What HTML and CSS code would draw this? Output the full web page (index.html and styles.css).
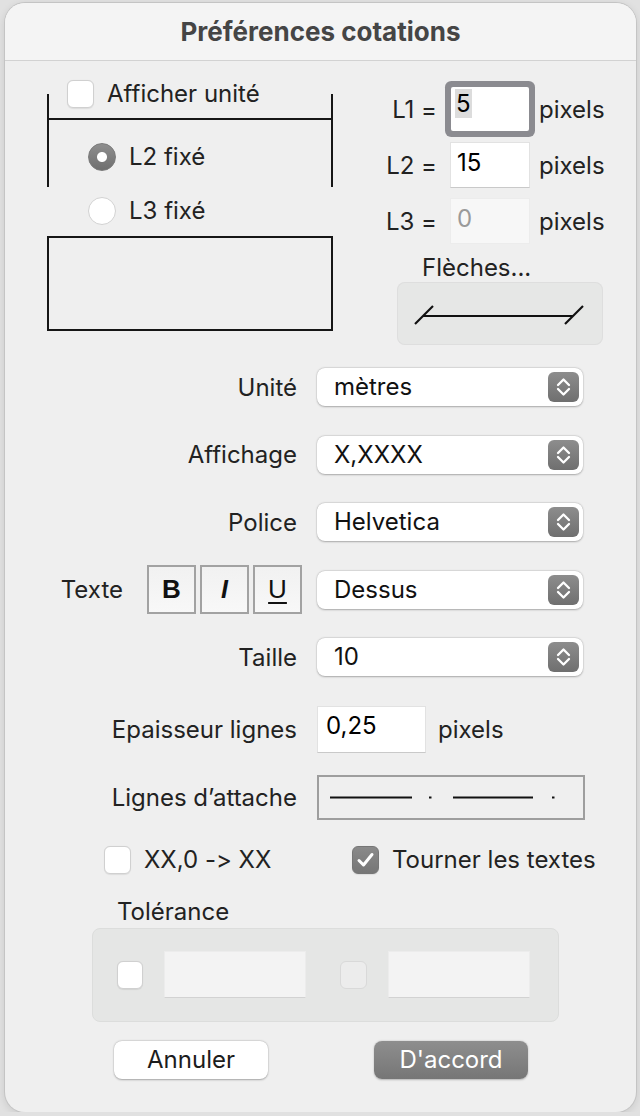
FILE: index.html
```html
<!DOCTYPE html>
<html lang="fr">
<head>
<meta charset="UTF-8">
<title>Préférences cotations</title>
<link rel="stylesheet" href="styles.css">
</head>
<body>
  <div class="window">
    <header class="titlebar">Préférences cotations</header>

    <section class="top">
      <div class="diagram">
        <div class="dim">
          <label class="check"><span class="box"></span>Afficher unité</label>
          <div class="dim-line"></div>
          <label class="radio l2"><span class="dot on"></span>L2 fixé</label>
        </div>
        <label class="radio l3"><span class="dot"></span>L3 fixé</label>
        <div class="frame"></div>
      </div>

      <div class="side">
        <div class="lengths">
          <span class="len-label">L1 =</span>
          <div class="field focus"><span class="sel">5</span></div>
          <span class="unit">pixels</span>
          <span class="len-label">L2 =</span>
          <div class="field">15</div>
          <span class="unit">pixels</span>
          <span class="len-label">L3 =</span>
          <div class="field off">0</div>
          <span class="unit">pixels</span>
        </div>
        <div class="arrows-label">Flèches...</div>
        <div class="arrows">
          <svg width="206" height="63" viewBox="0 0 206 63">
            <line x1="26" y1="34" x2="176" y2="34" stroke="#111" stroke-width="2.2"/>
            <line x1="18" y1="42" x2="36" y2="24" stroke="#111" stroke-width="2.2"/>
            <line x1="168" y1="42" x2="186" y2="24" stroke="#111" stroke-width="2.2"/>
          </svg>
        </div>
      </div>
    </section>

    <section class="settings">
      <div class="row">
        <span class="row-label">Unité</span>
        <div class="popup">mètres<span class="stepper"></span></div>
      </div>
      <div class="row">
        <span class="row-label">Affichage</span>
        <div class="popup">X,XXXX<span class="stepper"></span></div>
      </div>
      <div class="row">
        <span class="row-label">Police</span>
        <div class="popup">Helvetica<span class="stepper"></span></div>
      </div>
      <div class="row">
        <div class="row-label text-style">
          <span>Texte</span>
          <div class="style-btns">
            <span class="style-btn b">B</span>
            <span class="style-btn i">I</span>
            <span class="style-btn u">U</span>
          </div>
        </div>
        <div class="popup">Dessus<span class="stepper"></span></div>
      </div>
      <div class="row">
        <span class="row-label">Taille</span>
        <div class="popup">10<span class="stepper"></span></div>
      </div>
      <div class="row thick">
        <span class="row-label">Epaisseur lignes</span>
        <div class="field wide">0,25</div>
        <span class="unit after">pixels</span>
      </div>
      <div class="row attach">
        <span class="row-label">Lignes d’attache</span>
        <div class="dash-box">
          <svg width="264" height="41" viewBox="0 0 264 41">
            <g stroke="#111" stroke-width="2">
              <line x1="11" y1="20.5" x2="93" y2="20.5"/>
              <line x1="110" y1="20.5" x2="112.5" y2="20.5"/>
              <line x1="134" y1="20.5" x2="214" y2="20.5"/>
              <line x1="233" y1="20.5" x2="235.5" y2="20.5"/>
            </g>
          </svg>
        </div>
      </div>
    </section>

    <div class="options">
      <label class="check first"><span class="box"></span>XX,0 -&gt; XX</label>
      <label class="check"><span class="box checked">
        <svg width="27" height="28" viewBox="0 0 27 28"><path d="M7 14.5 L11.5 19 L20 8.5" fill="none" stroke="#fff" stroke-width="3" stroke-linecap="round" stroke-linejoin="round"/></svg>
      </span>Tourner les textes</label>
    </div>

    <div class="tol-label">Tolérance</div>
    <div class="tolerance">
      <span class="box"></span>
      <div class="field dim-field"></div>
      <span class="box disabled"></span>
      <div class="field dim-field"></div>
    </div>

    <div class="buttons">
      <button class="btn cancel">Annuler</button>
      <button class="btn ok">D'accord</button>
    </div>
  </div>

  <svg width="0" height="0" style="position:absolute">
    <defs>
      <symbol id="chev" viewBox="0 0 31 30">
        <polyline points="10,13 15.5,7.5 21,13" fill="none" stroke="#fff" stroke-width="2.3" stroke-linecap="round" stroke-linejoin="round"/>
        <polyline points="10,17 15.5,22.5 21,17" fill="none" stroke="#fff" stroke-width="2.3" stroke-linecap="round" stroke-linejoin="round"/>
      </symbol>
    </defs>
  </svg>
  <script>
    // stepper arrows on every popup button
    document.querySelectorAll('.stepper').forEach(s => {
      s.innerHTML = '<svg width="31" height="30"><use href="#chev"/></svg>';
    });
  </script>
</body>
</html>
```

FILE: styles.css
```css
* { box-sizing: border-box; }
body {
  margin: 0;
  padding: 3px 4px 0 5px;
  background: #e1e1e1;
  font-family: Inter, "Noto Sans", sans-serif;
  font-feature-settings: "calt" 0;
  font-size: 24px;
  color: #222;
}
.window {
  width: 631px;
  height: 1109px;
  background: #efefef;
  border-radius: 20px;
  overflow: hidden;
  box-shadow: 0 0 0 1px #c4c4c4, 0 2px 8px rgba(0,0,0,0.12);
}
.titlebar {
  height: 58px;
  display: flex;
  align-items: center;
  justify-content: center;
  background: #f4f4f4;
  border-bottom: 1px solid #d2d2d2;
  font-size: 26px;
  font-weight: 700;
  color: #454545;
}

/* checkboxes and radios */
.check, .radio {
  display: flex;
  align-items: center;
  height: 28px;
  line-height: 28px;
}
.box {
  flex: none;
  width: 27px;
  height: 28px;
  margin-right: 13px;
  background: #fff;
  border: 1px solid #d0d0d0;
  border-radius: 6px;
  box-shadow: 0 0.5px 1px rgba(0,0,0,0.08);
}
.box.checked {
  background: linear-gradient(#8a8a8a, #767676);
  border-color: #767676;
}
.box.checked svg { display: block; margin: -1px; }
.box.disabled {
  background: #ececec;
  border-color: #d9d9d9;
  box-shadow: none;
}
.dot {
  flex: none;
  width: 28px;
  height: 28px;
  margin-right: 13px;
  border-radius: 50%;
  background: #fff;
  border: 1px solid #d2d2d2;
}
.dot.on {
  background: radial-gradient(circle, #fff 0 4.5px, transparent 5.5px), linear-gradient(#8e8e8e, #6f6f6f);
  border-color: #7a7a7a;
}

/* top part: dimension sketch + lengths */
.top {
  display: flex;
  align-items: flex-start;
}
.diagram {
  margin-left: 42px;
  width: 286px;
}
.dim {
  display: flex;
  flex-direction: column;
  align-items: flex-start;
  margin-top: 33px;
  height: 93px;
  border-left: 2px solid #161616;
  border-right: 2px solid #161616;
}
.dim .check {
  margin-top: -14px;
  margin-left: 18px;
  height: 27px;
}
.dim-line {
  align-self: stretch;
  margin-top: 11px;
  border-top: 2px solid #161616;
}
.radio.l2 { margin-top: 23px; margin-left: 39px; }
.radio.l3 { margin-top: 10px; margin-left: 41px; }
.frame {
  margin-top: 11px;
  height: 95px;
  border: 2px solid #161616;
}

.side {
  margin-left: 52px;
  width: 218px;
}
.lengths {
  margin-top: 25px;
  display: grid;
  grid-template-columns: 65px 80px auto;
  grid-template-rows: repeat(3, 46px);
  row-gap: 10px;
  align-items: center;
}
.len-label {
  text-align: right;
  padding-right: 13px;
  white-space: nowrap;
}
.unit { padding-left: 9px; }
.field {
  height: 46px;
  padding: 6px 0 0 6px;
  background: #fff;
  border: 1px solid #e2e2e2;
  border-bottom-color: #c9c9c9;
  color: #000;
  line-height: 28px;
}
.field.focus {
  margin: 1px;
  height: 44px;
  padding: 2px 0 0 4px;
  border: none;
  border-radius: 2px;
  box-shadow: 0 0 0 6px #8b8b90;
}
.field .sel {
  display: inline-block;
  padding: 0 1px;
  line-height: 29px;
  background: #dcdcdc;
}
.field.off {
  background: #f7f7f7;
  border-color: #ececec;
  color: #9a9a9a;
}
.arrows-label {
  margin-top: 11px;
  padding-left: 37px;
  line-height: 26px;
}
.arrows {
  margin-top: 1px;
  margin-left: 12px;
  width: 206px;
  height: 63px;
  background: #e6e7e6;
  border-radius: 8px;
  box-shadow: inset 0 0 0 1px #dedede;
}
.arrows svg { display: block; }

/* popup rows */
.settings {
  margin-top: 23px;
  display: flex;
  flex-direction: column;
  gap: 29.5px;
}
.row {
  display: flex;
  align-items: center;
  height: 38px;
}
.row-label {
  flex: none;
  width: 292px;
  margin-right: 20px;
  text-align: right;
}
.popup {
  position: relative;
  width: 266px;
  height: 38px;
  padding-left: 17px;
  line-height: 37px;
  color: #111;
  background: #fff;
  border-radius: 8px;
  box-shadow: 0 0.5px 2px rgba(0,0,0,0.28), 0 0 0 0.5px rgba(0,0,0,0.06);
}
.stepper {
  position: absolute;
  top: 4px;
  right: 4px;
  width: 31px;
  height: 30px;
  border-radius: 6px;
  background: linear-gradient(#8d8d8d, #6f6f6f);
}
.stepper svg { display: block; }

.text-style {
  width: 297px;
  margin-right: 15px;
  display: flex;
  align-items: center;
  justify-content: flex-end;
  gap: 24px;
}
.style-btns {
  display: flex;
  gap: 4px;
}
.style-btn {
  width: 49px;
  height: 49px;
  display: flex;
  align-items: center;
  justify-content: center;
  border: 2px solid #a2a2a2;
  background: linear-gradient(#f1f1f1, #f8f8f8);
  color: #111;
  font-family: "Liberation Sans", Arial, sans-serif;
  font-size: 26px;
}
.style-btn.b { font-weight: 700; }
.style-btn.i { font-style: italic; font-weight: 700; font-size: 25px; }
.style-btn.u { text-decoration: underline; text-underline-offset: 4px; text-decoration-thickness: 2px; }

.row.thick { height: 47px; }
.field.wide {
  width: 109px;
  height: 47px;
  padding: 5px 0 0 8px;
}
.unit.after { padding-left: 12px; }
.row.attach {
  height: 45px;
  margin-top: -7.5px;
}
.dash-box {
  width: 268px;
  height: 45px;
  border: 2px solid #9e9e9e;
}
.dash-box svg { display: block; }

/* bottom options */
.options {
  margin-top: 26px;
  display: flex;
}
.options .first {
  width: 248px;
  margin-left: 99px;
}
.tol-label {
  margin-top: 25px;
  margin-left: 112px;
  line-height: 26px;
}
.tolerance {
  margin-top: 3px;
  margin-left: 87px;
  width: 467px;
  height: 94px;
  display: flex;
  align-items: center;
  padding-left: 24px;
  background: #e5e6e5;
  border: 1px solid #dcdddc;
  border-radius: 8px;
}
.tolerance .box {
  width: 26px;
  margin-right: 0;
}
.tolerance .box.disabled { width: 27px; margin-left: 34px; }
.field.dim-field {
  width: 142px;
  height: 47px;
  margin-left: 21px;
  background: #f3f3f3;
  border-color: #ececec;
  border-bottom-color: #d2d2d2;
}

.buttons {
  margin-top: 19px;
  display: flex;
}
.btn {
  width: 154px;
  height: 38px;
  border: none;
  border-radius: 8px;
  font-family: inherit;
  font-size: 24px;
  padding: 0;
}
.btn.cancel {
  margin-left: 109px;
  background: #fff;
  color: #1c1c1c;
  box-shadow: 0 0.5px 2px rgba(0,0,0,0.3), 0 0 0 0.5px rgba(0,0,0,0.05);
}
.btn.ok {
  margin-left: 106px;
  background: linear-gradient(#8e8e8e, #767676);
  color: #fff;
  box-shadow: 0 0.5px 2px rgba(0,0,0,0.25);
}
```
